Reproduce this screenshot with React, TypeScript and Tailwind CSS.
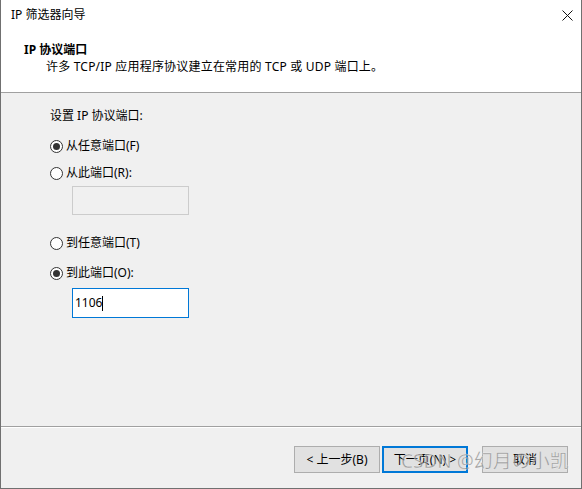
import React from "react";

const font = { fontFamily: '"Noto Sans", "Noto Sans CJK SC", sans-serif' };

function Radio({ checked, label, className = "" }: { checked?: boolean; label: string; className?: string }) {
  return (
    <div className={`flex items-center h-[16px] ${className}`}>
      <div className="w-[13px] h-[13px] rounded-full border border-[#333] bg-white flex items-center justify-center">
        {checked && <div className="w-[7px] h-[7px] rounded-full bg-[#333]" />}
      </div>
      <span className="ml-[3px] text-[12px] leading-[16px] text-black">{label}</span>
    </div>
  );
}

export default function App() {
  return (
    <div style={font} className="relative w-[582px] h-[489px] border-l border-r border-b border-[#707070] bg-[#f0f0f0] flex flex-col overflow-hidden">
      <div className="h-[92px] bg-white relative">
        <div className="absolute left-[10px] top-[7px] text-[12px] leading-[16px] text-black">IP 筛选器向导</div>
        <svg className="absolute left-[561px] top-[10px]" width="11" height="11" viewBox="0 0 11 11">
          <path d="M0.5 0.5 L10.5 10.5 M10.5 0.5 L0.5 10.5" stroke="#111" strokeWidth="1" />
        </svg>
        <div className="absolute left-[23px] top-[42px] text-[12px] leading-[16px] font-bold text-black">IP 协议端口</div>
        <div className="absolute left-[45px] top-[59px] text-[12px] leading-[16px] tracking-[0.2px] text-black">
          许多 TCP/IP 应用程序协议建立在常用的 TCP 或 UDP 端口上。
        </div>
      </div>
      <div className="h-px bg-[#a0a0a0]" />
      <div className="h-[333px] flex flex-col pl-[49px]">
        <div className="mt-[15px] h-[16px] text-[12px] leading-[16px] text-black">设置 IP 协议端口:</div>
        <Radio className="mt-[14px]" checked label="从任意端口(F)" />
        <Radio className="mt-[11px]" label="从此端口(R):" />
        <div className="mt-[5px] ml-[22px] w-[117px] h-[29px] border border-[#cccccc] bg-[#f0f0f0]" />
        <Radio className="mt-[20px]" label="到任意端口(T)" />
        <Radio className="mt-[14px]" checked label="到此端口(O):" />
        <div className="mt-[7px] ml-[22px] w-[117px] h-[30px] border border-[#0078d7] bg-white flex items-center pl-[2px]">
          <span className="text-[12px] leading-[16px] text-black">1106</span>
          <span className="w-px h-[15px] bg-black" />
        </div>
      </div>
      <div className="h-px bg-[#a0a0a0]" />
      <div className="h-px bg-white" />
      <div className="flex-1 flex items-start pt-[18px] pl-[293px]">
        <div className="w-[86px] h-[27px] border border-[#adadad] bg-[#e1e1e1] flex items-center justify-center text-[12px] text-black">
          &lt; 上一步(B)
        </div>
        <div className="ml-[2px] w-[86px] h-[27px] border-2 border-[#0078d7] bg-[#e1e1e1] flex items-center justify-center text-[12px] text-black">
          下一页(N) &gt;
        </div>
        <div className="ml-[14px] w-[86px] h-[27px] border border-[#adadad] bg-[#e1e1e1] flex items-center justify-center text-[12px] text-black">
          取消
        </div>
      </div>
      <div
        className="absolute left-[400px] top-[448px] text-[19px] leading-[26px] text-[rgba(125,125,125,0.7)] whitespace-nowrap"
        style={{ WebkitTextStroke: "0.4px rgba(255,255,255,0.7)" }}
      >
        CSDN @幻月の小凯
      </div>
    </div>
  );
}
